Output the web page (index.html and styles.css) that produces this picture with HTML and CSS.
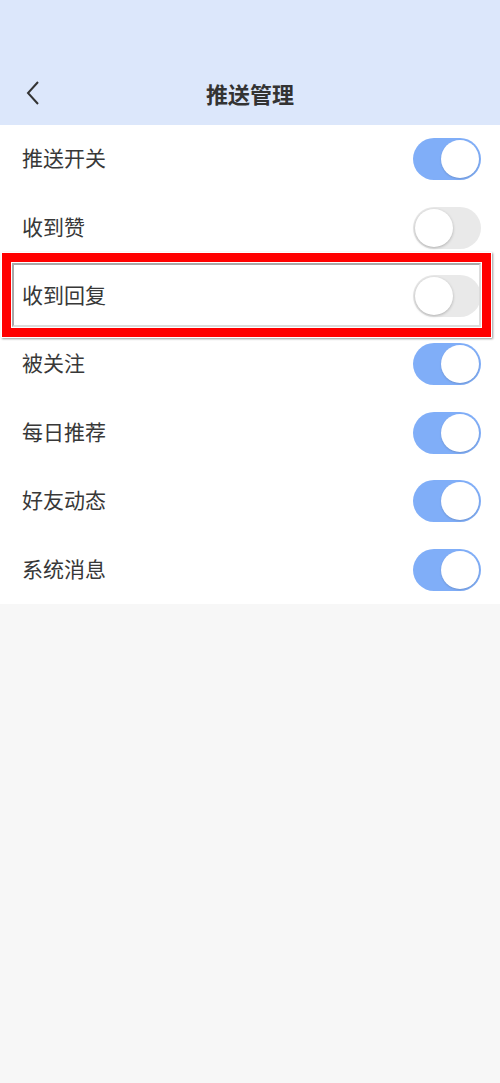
FILE: index.html
```html
<!DOCTYPE html>
<html lang="zh-CN">
<head>
  <meta charset="UTF-8">
  <meta name="viewport" content="width=device-width, initial-scale=1.0">
  <title>推送管理</title>
  <link rel="stylesheet" href="styles.css">
</head>
<body>
  <div class="header">
    <div class="navbar">
      <span class="back">
        <svg width="16" height="26" viewBox="0 0 16 26"><path d="M13 2 L3 13 L13 24" fill="none" stroke="#333" stroke-width="2"/></svg>
      </span>
      <h1>推送管理</h1>
    </div>
  </div>

  <div class="list">
    <div class="row"><span class="label">推送开关</span><span class="switch on"></span></div>
    <div class="row"><span class="label">收到赞</span><span class="switch"></span></div>
    <div class="row"><span class="label">收到回复</span><span class="switch"></span></div>
    <div class="row"><span class="label">被关注</span><span class="switch on"></span></div>
    <div class="row"><span class="label">每日推荐</span><span class="switch on"></span></div>
    <div class="row"><span class="label">好友动态</span><span class="switch on"></span></div>
    <div class="row"><span class="label">系统消息</span><span class="switch on"></span></div>
  </div>

  <div class="highlight"><div class="inner"></div></div>
</body>
</html>
```

FILE: styles.css
```css
body {
  margin: 0;
  background: #f7f7f7;
  font-family: "Noto Sans CJK SC", "Noto Sans", sans-serif;
  color: #333;
  height: 1083px;
  position: relative;
}
.header {
  background: #dce7fb;
  height: 125px;
  display: flex;
  align-items: flex-end;
}
.navbar {
  height: 64px;
  width: 100%;
  display: flex;
  align-items: center;
  justify-content: center;
  position: relative;
}
.back {
  position: absolute;
  left: 25px;
  top: 19px;
}
.navbar h1 {
  margin: 0;
  font-size: 22px;
  font-weight: bold;
  color: #333;
  line-height: 1;
}
.list {
  background: #fff;
}
.row {
  height: 68.4px;
  display: flex;
  align-items: center;
  justify-content: space-between;
  padding: 0 19px 0 22px;
  font-size: 21px;
  color: #383838;
}
.label {
  line-height: 1;
  padding-bottom: 3px;
}
.switch {
  width: 68px;
  height: 42px;
  border-radius: 21px;
  background: #e9e9e9;
  position: relative;
  box-sizing: border-box;
}
.switch::after {
  content: "";
  position: absolute;
  top: 2px;
  left: 2px;
  width: 38px;
  height: 38px;
  border-radius: 50%;
  background: #fff;
  box-shadow: 0 1px 3px rgba(0, 0, 0, 0.25);
}
.switch.on {
  background: #80aef8;
}
.switch.on::after {
  left: 28px;
  box-shadow: 0 1px 2px rgba(0, 0, 0, 0.15);
}
.highlight {
  position: absolute;
  left: 2px;
  top: 253px;
  width: 489px;
  height: 84px;
  box-sizing: border-box;
  border: 9px solid #ff0000;
  box-shadow: 0 0 0 1px #fff, 1px 1px 2px 1px rgba(0, 0, 0, 0.4);
}
.highlight .inner {
  position: absolute;
  inset: 1px;
  border: 2px solid #a8a8a8;
  border-right-color: #dcdcdc;
  border-bottom-color: #dcdcdc;
}
```
